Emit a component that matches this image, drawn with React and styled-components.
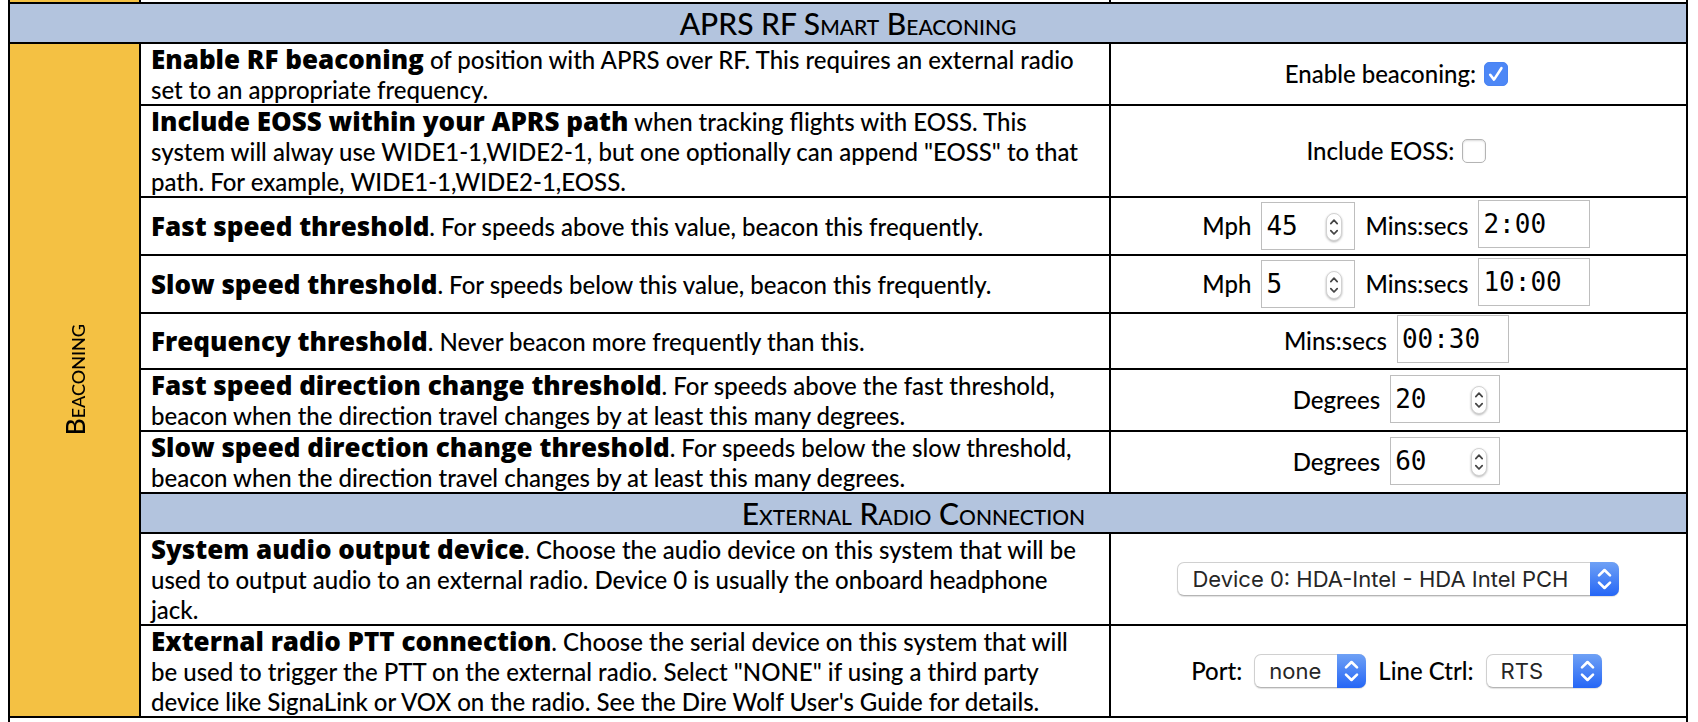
import React, { useId } from "react";
import styled, { createGlobalStyle, css } from "styled-components";

const GlobalStyle = createGlobalStyle`
  body {
    margin: 0;
    background: #fff;
    color: #000;
    font: 500 24px/30px Lato, "Gill Sans", sans-serif;
  }
`;

const Page = styled.main`
  padding: 0 10px 0 8px;
`;

const SettingsTable = styled.table`
  width: 100%;
  border-collapse: collapse;
  table-layout: fixed;
  font: inherit;
`;

const SideCol = styled.col`
  width: 131px;
`;

const ControlCol = styled.col`
  width: 34.4%;
`;

const cellBorder = css`
  border: 2px solid #000;
  padding: 0;
`;

const EdgeCell = styled.td`
  ${cellBorder}
  height: ${(p) => p.$height}px;
  box-sizing: border-box;
  background: ${(p) => (p.$side ? "#f4c143" : "#fff")};
  ${(p) => (p.$at === "top" ? "border-top: 0;" : "border-bottom: 0;")}
`;

const SectionHeading = styled.th`
  ${cellBorder}
  box-sizing: border-box;
  height: 40px;
  background: #b3c4de;
  font-size: 30px;
  line-height: 38px;
  font-weight: 500;
  font-variant: small-caps;
  text-align: center;
`;

const SideHeading = styled.th`
  ${cellBorder}
  background: #f4c143;
  font-size: 26px;
  font-weight: 500;
  font-variant: small-caps;
`;

const SideText = styled.span`
  display: block;
  margin: 0 auto;
  writing-mode: vertical-rl;
  transform: rotate(180deg);
  width: 30px;
`;

const Description = styled.td`
  ${cellBorder}
  padding-left: 10px;
  white-space: nowrap;
`;

/* Text sits low in its row, so descenders may touch the rule below. */
const DescriptionText = styled.div`
  padding-top: 1px;
  margin-bottom: -1px;
`;

const Name = styled.strong`
  font: 800 26px/26px "Open Sans", sans-serif;
`;

const ControlCell = styled.td`
  ${cellBorder}
`;

const Controls = styled.div`
  display: flex;
  align-items: center;
  justify-content: center;
  gap: ${(p) => p.$gap || 10}px;
  min-height: ${(p) => p.$height || 60}px;
  padding-right: ${(p) => (p.$centered ? 0 : 4)}px;
`;

const Field = styled.span`
  position: relative;
  display: flex;
  margin-bottom: ${(p) => p.$lift || 0}px;
`;

const TextInput = styled.input`
  box-sizing: border-box;
  width: ${(p) => p.$width}px;
  height: 48px;
  margin: 0;
  padding: 0 4px;
  border: 1px solid #bebebe;
  border-radius: 0;
  background: #fff;
  color: #000;
  font: 26px "DejaVu Sans Mono", monospace;
  appearance: textfield;
  &::-webkit-inner-spin-button {
    display: none;
  }
`;

const Stepper = styled.svg`
  position: absolute;
  right: 13px;
  top: 11px;
  pointer-events: none;
  overflow: visible;
  filter: drop-shadow(0 1px 1px rgba(0, 0, 0, 0.3));
`;

const CheckBox = styled.input`
  appearance: none;
  box-sizing: border-box;
  width: 24px;
  height: 24px;
  margin: 0;
  border: 1px solid #b4b4b4;
  border-radius: 5px;
  background: #fff;
  box-shadow: inset 0 1px 2px rgba(0, 0, 0, 0.15);
  &:checked {
    border-color: #4a83f2;
    background: #4d87f6;
    box-shadow: none;
  }
  & + svg {
    display: none;
  }
  &:checked + svg {
    display: block;
  }
`;

const CheckMark = styled.svg`
  position: absolute;
  inset: 0;
  pointer-events: none;
`;

const SelectBox = styled.select`
  appearance: none;
  box-sizing: border-box;
  width: ${(p) => p.$width}px;
  height: 34px;
  margin: 0;
  padding: 0 29px 0 14px;
  border: 1px solid #d0d0d0;
  border-bottom-color: #b5b5b5;
  border-radius: 7px;
  background: #fff;
  box-shadow: 0 1px 1px rgba(0, 0, 0, 0.12);
  color: #262626;
  font: 22px Inter, sans-serif;
`;

const Arrows = styled.svg`
  position: absolute;
  right: 0;
  top: 0;
  pointer-events: none;
`;

function CheckControl({ label, checked }) {
  const id = useId();
  return (
    <Controls $gap={8}>
      <label htmlFor={id}>{label}</label>
      <Field>
        <CheckBox id={id} type="checkbox" defaultChecked={checked} />
        <CheckMark width="24" height="24" viewBox="0 0 24 24" fill="none">
          <path d="M6.2 12.8 L10 17.6 L17.4 6.2" stroke="#fff" strokeWidth="2.6" strokeLinecap="round" strokeLinejoin="round" />
        </CheckMark>
      </Field>
    </Controls>
  );
}

function NumberControl({ label, value, width, lift }) {
  const id = useId();
  return (
    <>
      <label htmlFor={id}>{label}</label>
      <Field $lift={lift}>
        <TextInput id={id} type="number" defaultValue={value} $width={width} />
        <Stepper width="16" height="28" viewBox="0 0 16 28" fill="none">
          <rect x="0.5" y="0.5" width="15" height="27" rx="7.5" fill="#fff" stroke="#d2d2d2" />
          <path d="M4.8 10.6 L8 7.2 L11.2 10.6 M4.8 17.6 L8 21 L11.2 17.6" stroke="#444" strokeWidth="1.7" strokeLinecap="round" strokeLinejoin="round" />
        </Stepper>
      </Field>
    </>
  );
}

function TimeControl({ value }) {
  const id = useId();
  return (
    <>
      <label htmlFor={id}>Mins:secs</label>
      <Field $lift={4}>
        <TextInput id={id} type="text" defaultValue={value} $width={112} />
      </Field>
    </>
  );
}

function SelectControl({ label, name, value, width }) {
  const id = useId();
  return (
    <>
      {label && <label htmlFor={id}>{label}</label>}
      <Field>
        <SelectBox id={id} aria-label={name} defaultValue={value} $width={width}>
          <option>{value}</option>
        </SelectBox>
        <Arrows width="29" height="34" viewBox="0 0 29 34" fill="none">
          <defs>
            <linearGradient id={`${id}-blue`} x1="0" y1="0" x2="0" y2="1">
              <stop offset="0" stopColor="#6fa1f5" />
              <stop offset="1" stopColor="#2566f6" />
            </linearGradient>
          </defs>
          <path d="M0 0 H22 A7 7 0 0 1 29 7 V27 A7 7 0 0 1 22 34 H0 Z" fill={`url(#${id}-blue)`} />
          <path d="M9 13.4 L14.5 8 L20 13.4 M9 20.6 L14.5 26 L20 20.6" stroke="#fff" strokeWidth="2.6" strokeLinecap="round" strokeLinejoin="round" />
        </Arrows>
      </Field>
    </>
  );
}

function SettingCells({ name, lines, children }) {
  return (
    <>
      <Description>
        <DescriptionText>
          <Name>{name}</Name>
          {lines.map((line, i) => (
            <React.Fragment key={line}>
              {i > 0 && <br />}
              {line}
            </React.Fragment>
          ))}
        </DescriptionText>
      </Description>
      <ControlCell>{children}</ControlCell>
    </>
  );
}

export default function App() {
  return (
    <Page>
      <GlobalStyle />
      <SettingsTable>
        <colgroup>
          <SideCol />
          <col />
          <ControlCol />
        </colgroup>
        <tbody>
          <tr>
            <EdgeCell $at="top" $height={3} $side />
            <EdgeCell $at="top" $height={3} />
            <EdgeCell $at="top" $height={3} />
          </tr>
          <tr>
            <SectionHeading colSpan={3}>APRS RF Smart Beaconing</SectionHeading>
          </tr>
          <tr>
            <SideHeading rowSpan={10} scope="rowgroup">
              <SideText>Beaconing</SideText>
            </SideHeading>
            <SettingCells
              name="Enable RF beaconing"
              lines={[
                " of position with APRS over RF. This requires an external radio",
                "set to an appropriate frequency.",
              ]}
            >
              <CheckControl label="Enable beaconing:" checked />
            </SettingCells>
          </tr>
          <tr>
            <SettingCells
              name="Include EOSS within your APRS path"
              lines={[
                " when tracking flights with EOSS. This",
                'system will alway use WIDE1-1,WIDE2-1, but one optionally can append "EOSS" to that',
                "path. For example, WIDE1-1,WIDE2-1,EOSS.",
              ]}
            >
              <CheckControl label="Include EOSS:" />
            </SettingCells>
          </tr>
          <tr>
            <SettingCells
              name="Fast speed threshold"
              lines={[". For speeds above this value, beacon this frequently."]}
            >
              <Controls $height={56}>
                <NumberControl label="Mph" value={45} width={94} />
                <TimeControl value="2:00" />
              </Controls>
            </SettingCells>
          </tr>
          <tr>
            <SettingCells
              name="Slow speed threshold"
              lines={[". For speeds below this value, beacon this frequently."]}
            >
              <Controls $height={56}>
                <NumberControl label="Mph" value={5} width={94} />
                <TimeControl value="10:00" />
              </Controls>
            </SettingCells>
          </tr>
          <tr>
            <SettingCells
              name="Frequency threshold"
              lines={[". Never beacon more frequently than this."]}
            >
              <Controls $height={54}>
                <TimeControl value="00:30" />
              </Controls>
            </SettingCells>
          </tr>
          <tr>
            <SettingCells
              name="Fast speed direction change threshold"
              lines={[
                ". For speeds above the fast threshold,",
                "beacon when the direction travel changes by at least this many degrees.",
              ]}
            >
              <Controls>
                <NumberControl label="Degrees" value={20} width={110} lift={2} />
              </Controls>
            </SettingCells>
          </tr>
          <tr>
            <SettingCells
              name="Slow speed direction change threshold"
              lines={[
                ". For speeds below the slow threshold,",
                "beacon when the direction travel changes by at least this many degrees.",
              ]}
            >
              <Controls>
                <NumberControl label="Degrees" value={60} width={110} lift={2} />
              </Controls>
            </SettingCells>
          </tr>
          <tr>
            <SectionHeading colSpan={2}>External Radio Connection</SectionHeading>
          </tr>
          <tr>
            <SettingCells
              name="System audio output device"
              lines={[
                ". Choose the audio device on this system that will be",
                "used to output audio to an external radio. Device 0 is usually the onboard headphone",
                "jack.",
              ]}
            >
              <Controls $centered>
                <SelectControl
                  name="System audio output device"
                  value="Device 0: HDA-Intel - HDA Intel PCH"
                  width={442}
                />
              </Controls>
            </SettingCells>
          </tr>
          <tr>
            <SettingCells
              name="External radio PTT connection"
              lines={[
                ". Choose the serial device on this system that will",
                'be used to trigger the PTT on the external radio. Select "NONE" if using a third party',
                "device like SignaLink or VOX on the radio. See the Dire Wolf User's Guide for details.",
              ]}
            >
              <Controls $gap={12}>
                <SelectControl label="Port:" value="none" width={112} />
                <SelectControl label="Line Ctrl:" value="RTS" width={116} />
              </Controls>
            </SettingCells>
          </tr>
          <tr>
            <EdgeCell $at="bottom" $height={5} colSpan={3} />
          </tr>
        </tbody>
      </SettingsTable>
    </Page>
  );
}
